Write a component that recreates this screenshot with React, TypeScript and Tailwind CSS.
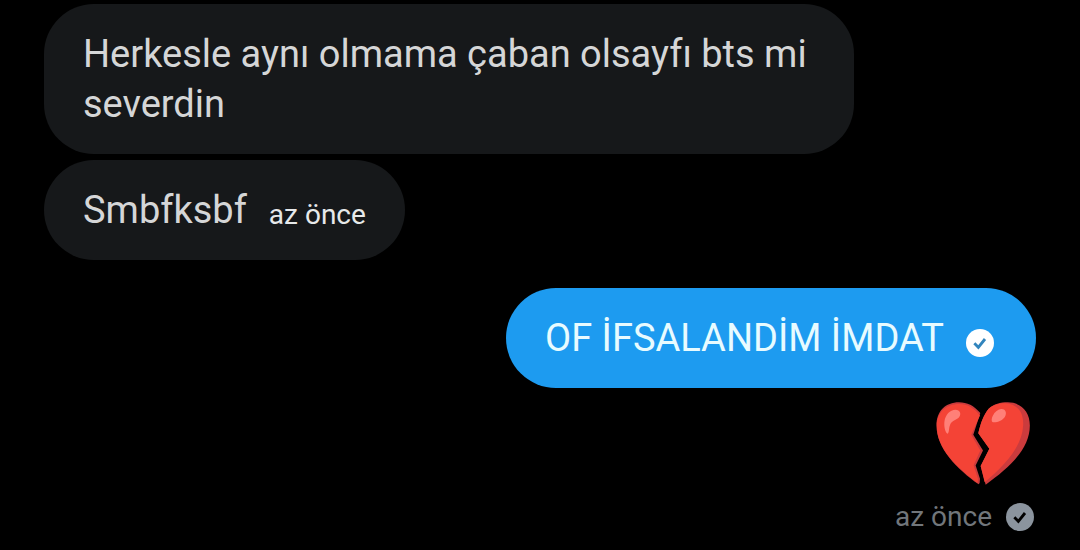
import type { ReactNode } from "react";

function SentBadge({ disc, tick }: { disc: string; tick: string }) {
  return (
    <svg viewBox="0 0 84 84" className="size-7 shrink-0" role="img" aria-label="Gönderildi">
      <circle cx="42" cy="42" r="42" className={disc} />
      <path d="M25 43 L37 55 L57 30" fill="none" strokeWidth="8.5" className={tick} />
    </svg>
  );
}

function BrokenHeart() {
  return (
    <svg viewBox="50 37 280 248" className="h-[83px] w-[94px]" role="img" aria-label="Kırık kalp">
      <path
        d="M182 70 C163 48 143 38 118 38 C78 38 51 65 51 107 C51 177 112 236 177 283 L180 279 L181 266 L168 227 L190 182 L161 135 Z"
        fill="#cb3b3d"
      />
      <path
        d="M181 77 C162 54 143 43 119 43 C80 43 52 68 52 108 C52 176 111 232 174 279 L175 266 L162 226 L182 182 L155 135 Z"
        fill="#f44336"
      />
      <path
        d="M207 57 C223 43 241 38 264 38 C304 38 330 66 330 107 C330 178 267 235 198 284 L183 228 L209 177 L176 130 C183 101 191 76 207 57 Z"
        fill="#cb3b3d"
      />
      <path
        d="M207 57 C222 45 237 41 256 41 C293 43 312 68 310 107 C307 169 257 225 195 277 L183 228 L209 177 L176 130 C183 101 191 76 207 57 Z"
        fill="#f44336"
      />
      <path
        d="M108 60 C121 60 126 72 119 82 C113 91 97 92 92 104 C87 115 90 127 84 132 C76 128 73 108 75 94 C78 75 91 60 108 60 Z"
        fill="#ff8078"
      />
      <path
        d="M244 58 C256 57 262 68 256 80 C250 92 228 100 218 97 C211 91 222 61 244 58 Z"
        fill="#ff8078"
      />
    </svg>
  );
}

function Bubble({ className, children }: { className: string; children: ReactNode }) {
  return (
    <div
      className={`flex max-w-[810px] items-center gap-[22px] rounded-[50px] py-[25px] pl-[39px] text-[38px] leading-[50px] ${className}`}
    >
      {children}
    </div>
  );
}

export default function App() {
  return (
    <main className="flex min-h-screen flex-col bg-black px-11 pt-1 font-['Roboto','Noto_Sans',sans-serif]">
      <section className="flex flex-col items-start gap-1.5">
        <Bubble className="bg-[#16181a] pr-[39px] text-[#d5d6d7]">
          <p>Herkesle aynı olmama çaban olsayfı bts mi severdin</p>
        </Bubble>
        <Bubble className="bg-[#16181a] pr-[39px] text-[#d5d6d7]">
          <p>Smbfksbf</p>
          <time className="pt-2.5 text-[28px] leading-8 text-[#e7e9ea]">az önce</time>
        </Bubble>
      </section>
      <section className="mt-7 flex flex-col items-end">
        <Bubble className="bg-[#1d9bf0] pr-[42px] text-[#e8fbff]">
          <p>OF İFSALANDİM İMDAT</p>
          <div className="pt-2.5">
            <SentBadge disc="fill-white" tick="stroke-[#3285bd]" />
          </div>
        </Bubble>
        <div className="mt-3.5 mr-1.5">
          <BrokenHeart />
        </div>
        <footer className="mt-4 mr-0.5 flex items-center gap-3.5 text-[28px] leading-8 text-[#71767b]">
          <time>az önce</time>
          <SentBadge disc="fill-[#8b949e]" tick="stroke-black" />
        </footer>
      </section>
    </main>
  );
}
